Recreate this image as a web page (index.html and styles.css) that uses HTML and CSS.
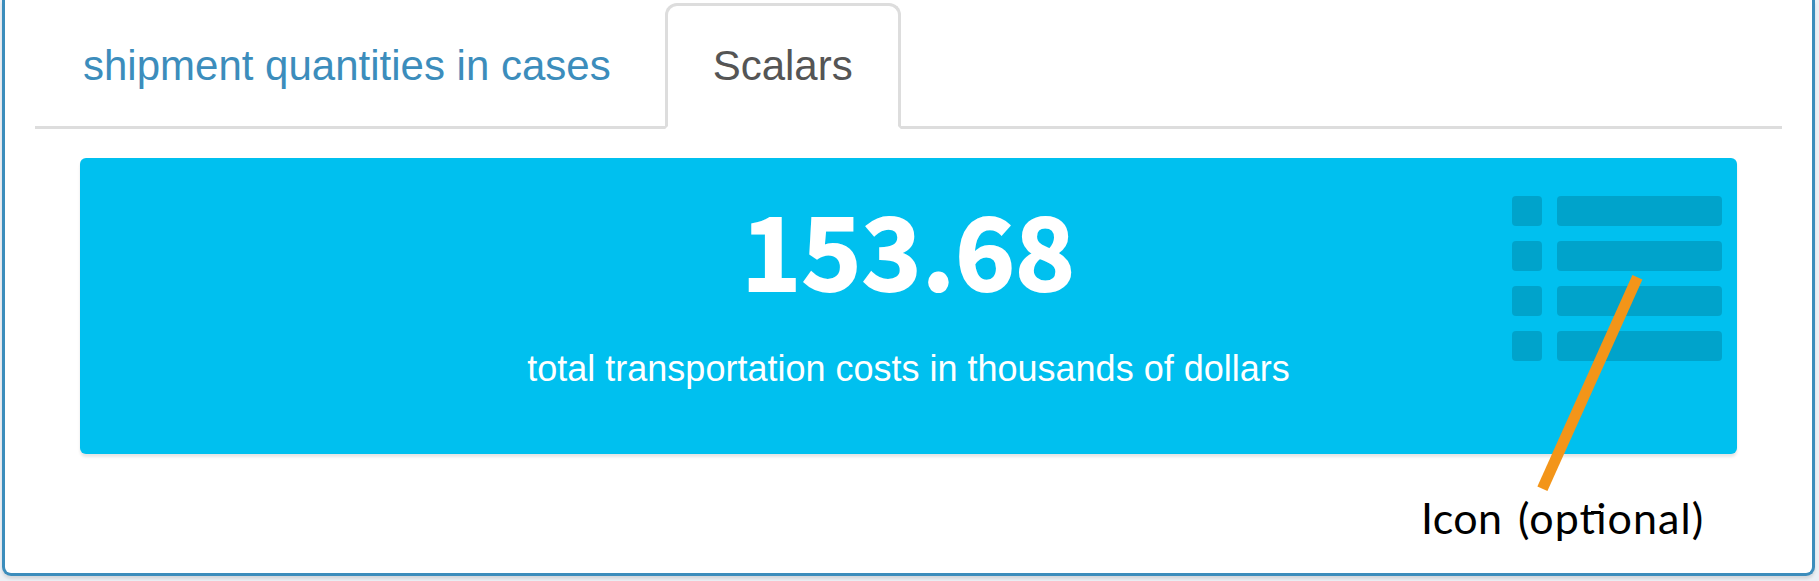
FILE: index.html
```html
<!DOCTYPE html>
<html lang="en">
<head>
<meta charset="utf-8">
<title>Scalars</title>
<link rel="stylesheet" href="styles.css">
</head>
<body>
<main class="box">
  <nav class="tabs">
    <a class="tab">shipment quantities in cases</a>
    <a class="tab active">Scalars</a>
  </nav>
  <section class="value-box">
    <div class="value">153.68</div>
    <p class="description">total transportation costs in thousands of dollars</p>
    <svg class="list-icon" width="210" height="165" viewBox="0 0 210 165">
      <rect x="0" y="0" width="30" height="30" rx="4"/><rect x="45" y="0" width="165" height="30" rx="4"/>
      <rect x="0" y="45" width="30" height="30" rx="4"/><rect x="45" y="45" width="165" height="30" rx="4"/>
      <rect x="0" y="90" width="30" height="30" rx="4"/><rect x="45" y="90" width="165" height="30" rx="4"/>
      <rect x="0" y="135" width="30" height="30" rx="4"/><rect x="45" y="135" width="165" height="30" rx="4"/>
    </svg>
  </section>
</main>
<svg class="pointer" width="120" height="230" viewBox="0 0 120 230">
  <line x1="107.4" y1="7.2" x2="12.4" y2="218.8"/>
</svg>
<div class="callout">Icon <span class="wide">(op<span class="join">t</span>ional)</span></div>
</body>
</html>
```
FILE: styles.css
```css
* { box-sizing: border-box; }
body {
  margin: 0;
  height: 581px;
  padding: 0 4px 5px 2px;
  overflow: hidden;
  background: #ecf0f5;
  font-family: "Liberation Sans", Arial, sans-serif;
}
.box {
  height: 576px;
  padding: 3px 30px 0;
  background: #fff;
  border: 3px solid #3c8dbc;
  border-top: 0;
  border-radius: 0 0 9px 9px;
  box-shadow: 0 3px 3px rgba(0, 0, 0, .1);
}
.tabs {
  display: flex;
  height: 126px;
  border-bottom: 3px solid #ddd;
}
.tab {
  height: 126px;
  margin-right: 6px;
  padding: 30px 45px;
  border: 3px solid transparent;
  border-radius: 12px 12px 0 0;
  color: #3c8dbc;
  font-size: 42px;
  line-height: 60px;
  white-space: nowrap;
}
.tab.active {
  background: #fff;
  border-color: #ddd;
  border-bottom-color: #fff;
  color: #555;
}
.value-box {
  position: relative;
  height: 296px;
  margin: 29px 45px 0;
  padding-top: 23px;
  border-radius: 6px;
  background: #00c0ef;
  box-shadow: 0 3px 3px rgba(0, 0, 0, .1);
  color: #fff;
  text-align: center;
}
.value {
  height: 132px;
  font: bold 101px/132px "Noto Sans CJK SC", sans-serif;
  letter-spacing: .5px;
  -webkit-text-stroke: 2px #fff;
}
.description {
  margin: 30px 0 0;
  font-size: 36px;
  line-height: 51px;
}
.list-icon {
  position: absolute;
  top: 38px;
  right: 15px;
  fill: rgba(0, 0, 0, .15);
}
.pointer {
  position: absolute;
  left: 1530px;
  top: 270px;
  stroke: #f39519;
  stroke-width: 11;
}
.callout {
  position: absolute;
  left: 1421px;
  top: 488px;
  color: #000;
  font: 43px/60px Lato, sans-serif;
  letter-spacing: .4px;
  word-spacing: 4px;
  white-space: nowrap;
}
.wide { letter-spacing: 1.1px; }
.join { position: relative; letter-spacing: 1.1px; }
/* crossbar linking the t and i of the ligature */
.join::after {
  content: "";
  position: absolute;
  left: 11px;
  top: 19px;
  width: 10px;
  height: 3px;
  background: #000;
}
```
